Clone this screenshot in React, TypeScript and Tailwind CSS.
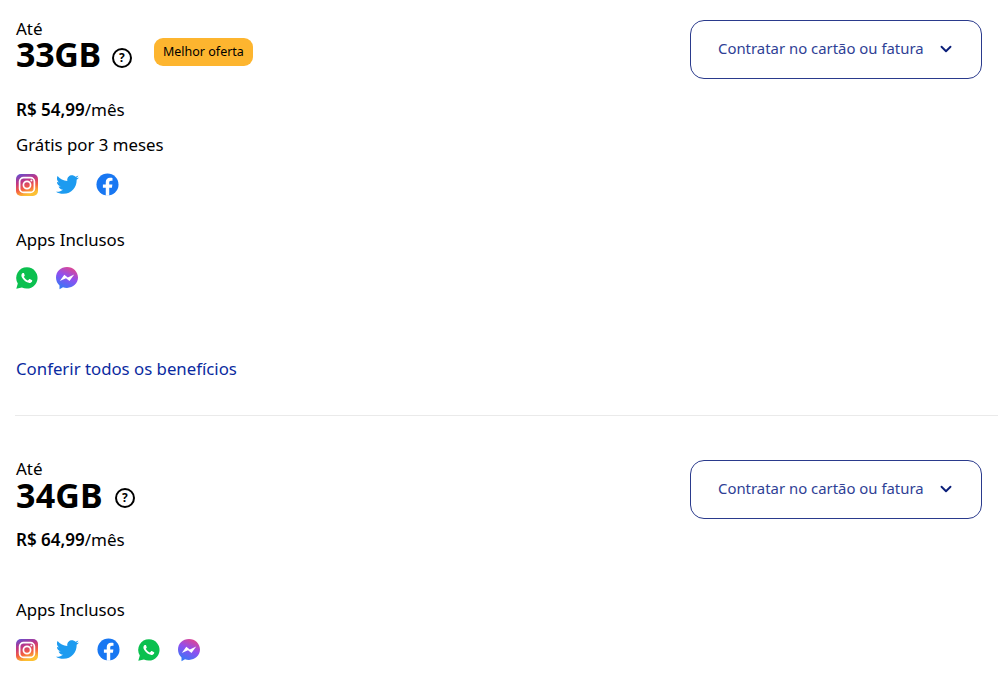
import type { ReactNode } from "react";
import { ChevronDown } from "lucide-react";
import { FaTwitter } from "react-icons/fa";

function Slot({ children }: { children: ReactNode }) {
  return <span className="flex h-[23px] w-[22px] shrink-0 items-center justify-center">{children}</span>;
}

function Instagram() {
  return (
    <svg viewBox="0 0 24 24" className="h-[24px] w-[24px] shrink-0">
      <defs>
        <linearGradient id="ig" x1="0" y1="0" x2="0.35" y2="1">
          <stop offset="0" stopColor="#5b51d8" />
          <stop offset="0.4" stopColor="#c13584" />
          <stop offset="0.72" stopColor="#f56040" />
          <stop offset="1" stopColor="#fcc033" />
        </linearGradient>
      </defs>
      <rect x="1" y="1" width="22" height="22" rx="5" fill="url(#ig)" />
      <rect x="4.6" y="4.6" width="14.8" height="14.8" rx="4" fill="none" stroke="#fff" strokeWidth="1.7" />
      <circle cx="12" cy="12" r="3.6" fill="none" stroke="#fff" strokeWidth="1.7" />
      <circle cx="16.4" cy="7.6" r="1" fill="#fff" />
    </svg>
  );
}

function Twitter() {
  return <FaTwitter className="h-[23px] w-[23px] shrink-0 text-[#1d9bf0]" />;
}

function Facebook() {
  return (
    <svg viewBox="0 0 24 24" className="h-[23px] w-[23px] shrink-0">
      <circle cx="12" cy="12" r="11.5" fill="#1877f2" />
      <path
        d="M16.6 15.4l.5-3.4h-3.3V9.8c0-.9.5-1.8 1.9-1.8h1.5V5.100s-1.300-.2-2.600-.2c-2.700 0-4.400 1.600-4.400 4.600V12H7.200v3.400h3v8.300a12 12 0 0 0 3.600 0v-8.300z"
        fill="#fff"
      />
    </svg>
  );
}

function Whatsapp() {
  return (
    <svg viewBox="0 0 24 24" className="h-[24px] w-[24px] shrink-0">
      <path d="M12 1.200a10.700 10.700 0 0 0-9.200 16.200L1.300 22.800l5.600-1.400A10.700 10.700 0 1 0 12 1.200z" fill="#0bc04f" />
      <path
        d="M8.700 6.600c-.3 0-.7.100-1 .5-.4.400-1.200 1.200-1.200 2.800s1.200 3.200 1.400 3.400c.2.200 2.300 3.700 5.700 5 2.800 1.100 3.400.9 4 .8.600-.1 2-.8 2.200-1.600.3-.8.300-1.400.2-1.600-.1-.1-.3-.2-.7-.4l-2.400-1.200c-.3-.1-.6-.2-.8.200l-1.100 1.400c-.2.200-.4.300-.8.100-2-.9-3.400-2-4.600-4.100-.2-.4 0-.6.200-.8l.8-1c.1-.2.100-.4 0-.6L9.800 7.200c-.3-.6-.6-.6-1.100-.6z"
        fill="#fff"
        transform="translate(12 12) scale(0.8) translate(-13.500 -13)"
      />
    </svg>
  );
}

function Messenger() {
  return (
    <svg viewBox="0 0 24 24" className="h-[24px] w-[24px] shrink-0">
      <defs>
        <linearGradient id="ms" x1="0.7" y1="0" x2="0.25" y2="1">
          <stop offset="0" stopColor="#e0468f" />
          <stop offset="0.45" stopColor="#8f4ff0" />
          <stop offset="1" stopColor="#2f7cf6" />
        </linearGradient>
      </defs>
      <path d="M12 1C5.800 1 1 5.500 1 11.600c0 3.200 1.300 5.900 3.500 7.800v3.800l3.500-1.900c1.200.4 2.600.6 4 .6 6.200 0 11-4.500 11-10.300S18.200 1 12 1z" fill="url(#ms)" />
      <path d="M4.800 15l4.500-6.300 3.500 2.700 6.400-2.900-4.700 6.400-3.500-2.700z" fill="#fff" />
    </svg>
  );
}

function Help() {
  return (
    <span className="flex h-[20px] w-[20px] items-center justify-center rounded-full border-2 border-black text-[12px] font-bold leading-none text-black">
      ?
    </span>
  );
}

function Contratar() {
  return (
    <button className="flex h-[59px] w-[292px] items-center gap-[13px] rounded-[14px] border border-[#2a3a8c] pb-[2px] pl-[27px] text-[14.9px] text-[#2f3f96]">
      Contratar no cartão ou fatura
      <ChevronDown className="h-[18px] w-[18px] text-[#0b1f7a]" strokeWidth={2.5} />
    </button>
  );
}

export default function App() {
  return (
    <main className="h-[678px] w-[1000px] overflow-hidden bg-white pl-[16px] pr-[2px] font-['Noto_Sans',sans-serif] text-[16.8px] text-black">
      <section className="-ml-px flex h-[416px] flex-col border-b border-[#eaeaea] pl-px pt-[20px]">
        <div className="flex justify-between pr-[16px]">
          <div>
            <p className="h-[18px] text-[17px] leading-[18px]">Até</p>
            <div className="flex h-[32px] items-center">
              <h2 className="text-[34px] font-bold leading-[32px] tracking-[-0.3px]">33GB</h2>
              <span className="ml-[11px] mt-[8px]"><Help /></span>
              <span className="mb-[4px] ml-[22px] flex h-[28px] w-[99px] items-center justify-center rounded-[9px] bg-[#fdb52f] text-[12.5px]">Melhor oferta</span>
            </div>
          </div>
          <Contratar />
        </div>
        <p className="mt-[19px] h-[24px] text-[17px] leading-[24px]"><b className="font-semibold">R$ 54,99</b>/mês</p>
        <p className="mt-[11px] h-[24px] leading-[24px]">Grátis por 3 meses</p>
        <div className="mt-[16px] flex gap-[18px]"><Slot><Instagram /></Slot><Slot><Twitter /></Slot><Slot><Facebook /></Slot></div>
        <p className="mt-[32px] h-[24px] leading-[24px]">Apps Inclusos</p>
        <div className="mt-[14px] flex gap-[18px]"><Slot><Whatsapp /></Slot><Slot><Messenger /></Slot></div>
        <a className="mt-[68px] text-[16.8px] leading-[24px] text-[#0a2aa0]">Conferir todos os benefícios</a>
      </section>
      <section className="flex flex-col pt-[44px]">
        <div className="flex justify-between pr-[16px]">
          <div>
            <p className="h-[18px] text-[17px] leading-[18px]">Até</p>
            <div className="flex h-[34px] items-center">
              <h2 className="text-[34px] font-bold leading-[34px] tracking-[0.2px]">34GB</h2>
              <span className="ml-[12px] mt-[6px]"><Help /></span>
            </div>
          </div>
          <Contratar />
        </div>
        <p className="mt-[9px] h-[24px] text-[17px] leading-[24px]"><b className="font-semibold">R$ 64,99</b>/mês</p>
        <p className="mt-[46px] h-[24px] leading-[24px]">Apps Inclusos</p>
        <div className="mt-[16px] flex gap-[18.500px]"><Slot><Instagram /></Slot><Slot><Twitter /></Slot><Slot><Facebook /></Slot><Slot><Whatsapp /></Slot><Slot><Messenger /></Slot></div>
      </section>
    </main>
  );
}
